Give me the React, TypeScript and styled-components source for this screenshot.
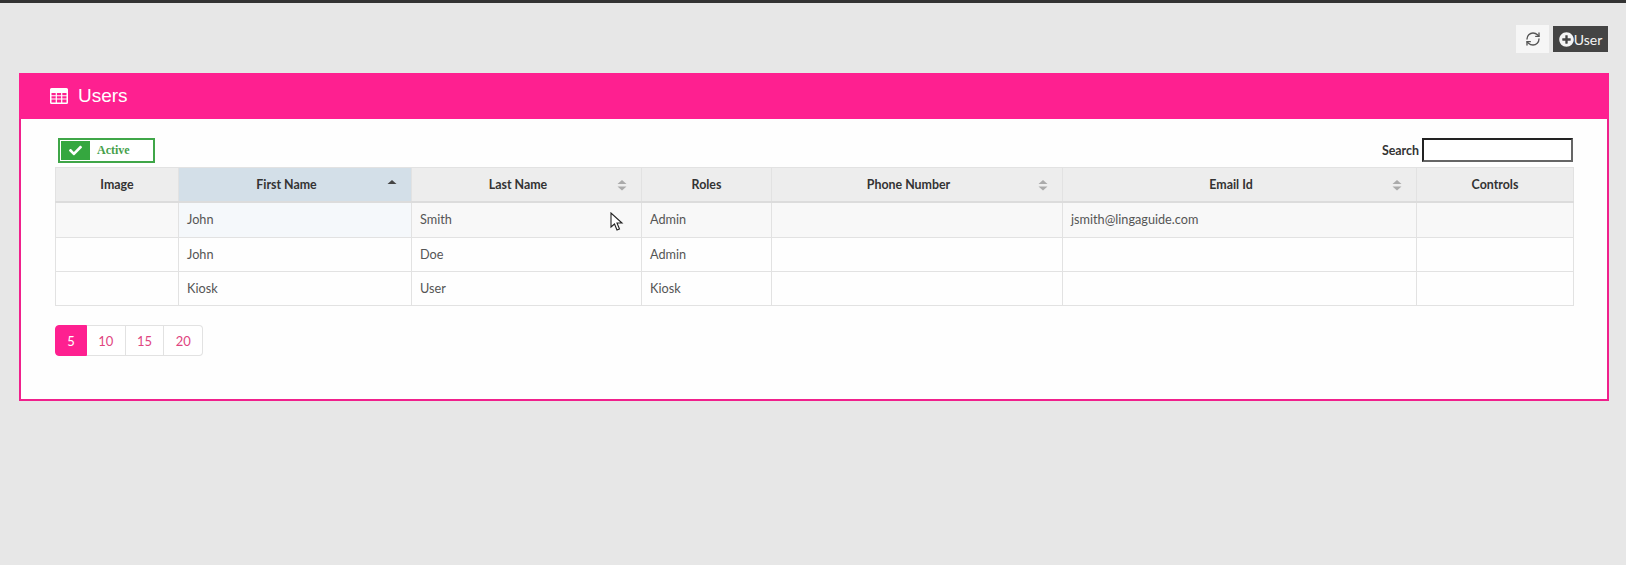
import React from "react";
import styled, { createGlobalStyle } from "styled-components";
import { FaCheck, FaPlusCircle } from "react-icons/fa";
import { RefreshCw } from "lucide-react";

const Global = createGlobalStyle`
  html, body { margin: 0; padding: 0; background: #e7e7e7; }
  body { font-family: Lato, "Open Sans", sans-serif; overflow: hidden; }
`;

const Page = styled.div`
  min-height: 565px;
  box-sizing: border-box;
  border-top: 3px solid #333;
  background: #e7e7e7;
  padding: 22px 17px 0 19px;
`;

const Toolbar = styled.div`
  display: flex;
  justify-content: flex-end;
  gap: 3px;
  height: 28px;
`;

const RefreshButton = styled.button`
  width: 33px;
  height: 28px;
  padding: 0;
  border: 0;
  background: #f6f6f6;
  color: #555;
  display: flex;
  align-items: center;
  justify-content: center;
`;

const AddButton = styled.button`
  width: 57px;
  height: 28px;
  padding: 0;
  border: 1px solid #e8e8e8;
  box-sizing: border-box;
  background: #444;
  color: #f4f4f4;
  font: 400 14px Lato, sans-serif;
  display: flex;
  align-items: center;
  justify-content: center;
`;

const Panel = styled.section`
  margin-top: 20px;
  height: 328px;
  box-sizing: border-box;
  border: 2px solid #f0208c;
  border-top: 0;
  background: #fefefe;
`;

const PanelHeader = styled.header`
  height: 46px;
  margin: 0 -2px;
  padding-left: 31px;
  background: #fe2090;
  color: #fff;
  display: flex;
  align-items: center;
  gap: 10px;
  font: 400 19px "Liberation Sans", Arial, sans-serif;
`;

const PanelBody = styled.div`
  padding: 19px 34px 0 34px;
`;

const FilterRow = styled.div`
  display: flex;
  justify-content: space-between;
  align-items: flex-start;
  height: 29px;
`;

const ActiveToggle = styled.div`
  margin-left: 3px;
  width: 97px;
  height: 25px;
  box-sizing: border-box;
  border: 2px solid #3fa648;
  padding: 1px;
  display: flex;
  align-items: stretch;
  gap: 7px;
  background: #fff;
  color: #46a04a;
  font: 700 12px "Liberation Serif", serif;
`;

const ToggleMark = styled.span`
  width: 29px;
  background: #35a73f;
  color: #fff;
  display: flex;
  align-items: center;
  justify-content: center;
`;

const ToggleLabel = styled.span`
  align-self: center;
`;

const SearchBox = styled.label`
  display: flex;
  align-items: center;
  gap: 3px;
  font: 700 12.4px Lato, sans-serif;
  color: #333;
`;

const SearchInput = styled.input`
  width: 151px;
  height: 24px;
  box-sizing: border-box;
  border: 2px solid #222;
  border-right-color: #666;
  border-bottom-color: #666;
  background: #fff;
  padding: 0;
  outline: none;
`;

const Table = styled.table`
  width: 1518px;
  table-layout: fixed;
  border-collapse: collapse;
  font-size: 12.7px;
`;

const Head = styled.th<{ $sorted?: boolean; $sortable?: boolean }>`
  position: relative;
  height: 34px;
  padding: 0 ${(p) => (p.$sortable ? "17px" : "0")} 0 0;
  box-sizing: border-box;
  background: ${(p) => (p.$sorted ? "#d3dfe8" : "#ededed")};
  border: 1px solid #e2e2e2;
  border-bottom: 2px solid #dcdcdc;
  color: #333;
  font-size: 12.4px;
  font-weight: 700;
  text-align: center;
`;

const SortMark = styled.svg`
  position: absolute;
  right: 14px;
  top: 10px;
`;

const Row = styled.tr<{ $hover?: boolean }>`
  background: ${(p) => (p.$hover ? "#f8f8f8" : "#fefefe")};
  height: ${(p) => (p.$hover ? "36px" : "34px")};
`;

const Cell = styled.td<{ $tint?: boolean }>`
  padding: 0 8px 2px;
  box-sizing: border-box;
  border: 1px solid #e2e2e2;
  color: #555;
  background: ${(p) => (p.$tint ? "#f5f8fb" : "transparent")};
`;

const Pager = styled.nav`
  display: inline-flex;
  margin-top: 19px;
  height: 31px;
`;

const PageLink = styled.a<{ $active?: boolean }>`
  height: 31px;
  box-sizing: border-box;
  width: ${(p) => (p.$active ? "32px" : "38.7px")};
  display: flex;
  align-items: center;
  justify-content: center;
  font-size: 13px;
  color: ${(p) => (p.$active ? "#fff" : "#e0457f")};
  background: ${(p) => (p.$active ? "#fe2090" : "#fff")};
  border: 1px solid ${(p) => (p.$active ? "#fe2090" : "#e2e2e2")};
  border-left-width: ${(p) => (p.$active ? "1px" : "0")};
  &:first-child { border-radius: 4px 0 0 4px; }
  &:last-child { border-radius: 0 4px 4px 0; }
`;

const Cursor = styled.svg`
  position: absolute;
  left: 610px;
  top: 212px;
`;

function SortIcon({ sorted }: { sorted?: boolean }) {
  return (
    <SortMark width="10" height="14" viewBox="0 0 10 14">
      <path d="M5 2 L9.5 6 L0.5 6 Z" fill={sorted ? "#444" : "#aaa"} />
      {!sorted && <path d="M5 12.5 L9.5 8.5 L0.5 8.5 Z" fill="#aaa" />}
    </SortMark>
  );
}

function TableIcon() {
  return (
    <svg width="18" height="16" viewBox="0 0 18 16">
      <path
        fill="#fff"
        fillRule="evenodd"
        d="M1.5 0h15A1.5 1.5 0 0 1 18 1.5v13a1.5 1.5 0 0 1-1.5 1.5h-15A1.5 1.5 0 0 1 0 14.5v-13A1.5 1.5 0 0 1 1.5 0Z
           M1.5 5v2.3h4.2V5Z M6.9 5v2.3h4.2V5Z M12.3 5v2.3h4.2V5Z
           M1.5 8.3v2.3h4.2V8.3Z M6.9 8.3v2.3h4.2V8.3Z M12.3 8.3v2.3h4.2V8.3Z
           M1.5 11.6v2.9h4.2v-2.9Z M6.9 11.6v2.9h4.2v-2.9Z M12.3 11.6v2.9h4.2v-2.9Z"
      />
    </svg>
  );
}

const widths = [123, 233, 230, 130, 291, 354, 157];
const rows = [
  ["John", "Smith", "Admin", "", "jsmith@lingaguide.com"],
  ["John", "Doe", "Admin", "", ""],
  ["Kiosk", "User", "Kiosk", "", ""],
];

export default function App() {
  return (
    <Page>
      <Global />
      <Toolbar>
        <RefreshButton aria-label="Refresh">
          <RefreshCw size={16} strokeWidth={2} />
        </RefreshButton>
        <AddButton>
          <FaPlusCircle size={15} />
          User
        </AddButton>
      </Toolbar>
      <Panel>
        <PanelHeader>
          <TableIcon />
          Users
        </PanelHeader>
        <PanelBody>
          <FilterRow>
            <ActiveToggle>
              <ToggleMark>
                <FaCheck size={13} />
              </ToggleMark>
              <ToggleLabel>Active</ToggleLabel>
            </ActiveToggle>
            <SearchBox>
              Search
              <SearchInput />
            </SearchBox>
          </FilterRow>
          <Table>
            <colgroup>
              {widths.map((w, i) => (
                <col key={i} width={w} />
              ))}
            </colgroup>
            <thead>
              <tr>
                <Head>Image</Head>
                <Head $sorted $sortable>
                  First Name
                  <SortIcon sorted />
                </Head>
                <Head $sortable>
                  Last Name
                  <SortIcon />
                </Head>
                <Head>Roles</Head>
                <Head $sortable>
                  Phone Number
                  <SortIcon />
                </Head>
                <Head $sortable>
                  Email Id
                  <SortIcon />
                </Head>
                <Head>Controls</Head>
              </tr>
            </thead>
            <tbody>
              {rows.map((r, i) => (
                <Row key={i} $hover={i === 0}>
                  <Cell />
                  {r.map((c, j) => (
                    <Cell key={j} $tint={i === 0 && j === 0}>
                      {c}
                    </Cell>
                  ))}
                  <Cell />
                </Row>
              ))}
            </tbody>
          </Table>
          <Pager>
            <PageLink $active>5</PageLink>
            <PageLink>10</PageLink>
            <PageLink>15</PageLink>
            <PageLink>20</PageLink>
          </Pager>
        </PanelBody>
      </Panel>
      <Cursor width="14" height="20" viewBox="0 0 14 20">
        <path d="M1 1 L1 15 L4.5 12 L7 18 L9.5 17 L7 11 L12 11 Z" fill="#fff" stroke="#222" strokeWidth="1.1" />
      </Cursor>
    </Page>
  );
}
